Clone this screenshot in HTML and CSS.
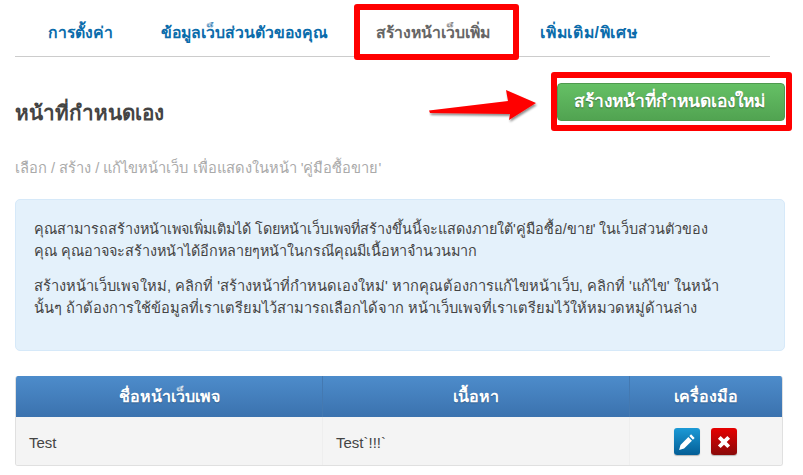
FILE: index.html
```html
<!DOCTYPE html>
<html lang="th">
<head>
<meta charset="utf-8">
<title>หน้าที่กำหนดเอง</title>
<link rel="stylesheet" href="styles.css">
</head>
<body>
<main class="page">
  <nav class="tabs">
    <a class="tab">การตั้งค่า</a>
    <a class="tab">ข้อมูลเว็บส่วนตัวของคุณ</a>
    <a class="tab active">สร้างหน้าเว็บเพิ่ม</a>
    <a class="tab">เพิ่มเติม/พิเศษ</a>
  </nav>
  <header class="head">
    <h1 class="title">หน้าที่กำหนดเอง</h1>
    <a class="btn-new">สร้างหน้าที่กำหนดเองใหม่</a>
  </header>
  <p class="sub">เลือก / สร้าง / แก้ไขหน้าเว็บ เพื่อแสดงในหน้า 'คู่มือซื้อขาย'</p>
  <section class="info">
    <p class="lead">คุณสามารถสร้างหน้าเพจเพิ่มเติมได้ โดยหน้าเว็บเพจที่สร้างขึ้นนี้จะแสดงภายใต้'คู่มือซื้อ/ขาย' ในเว็บส่วนตัวของคุณ คุณอาจจะสร้างหน้าได้อีกหลายๆหน้าในกรณีคุณมีเนื้อหาจำนวนมาก</p>
    <p>สร้างหน้าเว็บเพจใหม่, คลิกที่ 'สร้างหน้าที่กำหนดเองใหม่' หากคุณต้องการแก้ไขหน้าเว็บ, คลิกที่ 'แก้ไข' ในหน้านั้นๆ ถ้าต้องการใช้ข้อมูลที่เราเตรียมไว้สามารถเลือกได้จาก หน้าเว็บเพจที่เราเตรียมไว้ให้หมวดหมู่ด้านล่าง</p>
  </section>
  <div class="table">
    <div class="row thead">
      <div class="cell">ชื่อหน้าเว็บเพจ</div>
      <div class="cell">เนื้อหา</div>
      <div class="cell">เครื่องมือ</div>
    </div>
    <div class="row tbody">
      <div class="cell">Test</div>
      <div class="cell">Test`!!!`</div>
      <div class="cell tools">
        <a class="icon-btn edit"><svg viewBox="0 0 16 16" width="18" height="18"><path d="M11.6 1.2l3.2 3.2-1.5 1.5-3.2-3.2zM9.2 3.6l3.2 3.2L5.4 13.8 1 15l1.2-4.4z" fill="#fff"/></svg></a>
        <a class="icon-btn del"><svg viewBox="0 0 16 16" width="18" height="18"><path d="M2.6 5L5 2.6 8 5.6 11 2.6 13.4 5 10.4 8l3 3L11 13.4 8 10.4 5 13.4 2.6 11l3-3z" fill="#fff"/></svg></a>
      </div>
    </div>
  </div>
  <div class="mark mark-tab"></div>
  <div class="mark mark-btn"></div>
  <svg class="arrow" viewBox="0 0 110 50" width="110" height="50"><defs><filter id="s" x="-10%" y="-20%" width="125%" height="150%"><feDropShadow dx="1" dy="2" stdDeviation="1.2" flood-color="#000" flood-opacity=".45"/></filter></defs><path d="M0 23.5L79 14 77 3 107 16 80 33 81 27 1 26z" fill="#f00" filter="url(#s)"/></svg>
</main>
</body>
</html>
```
FILE: styles.css
```css
* { box-sizing: border-box; }
html, body { margin: 0; background: #fff; }
body {
  font-family: "Liberation Sans", "Noto Sans", sans-serif;
  color: #333;
  font-size: 14px;
  overflow: hidden;
}
.page { position: relative; width: 803px; height: 475px; padding: 10px 18px 0 15px; }
.tabs {
  display: flex;
  height: 47px;
  width: 755px;
  padding-left: 15px;
  border-bottom: 1px solid #ccc;
}
.tab {
  padding: 0 18px;
  line-height: 46px;
  font-size: 15.8px;
  font-weight: 700;
  color: #0b6cab;
  white-space: nowrap;
}
.tab + .tab { margin-left: 12px; }
.tab.active { color: #666; }
.tab:last-child { margin-left: 14px; letter-spacing: .75px; }
.head {
  display: flex;
  justify-content: space-between;
  align-items: center;
  height: 38px;
  margin-top: 26px;
}
.title { margin: 20px 0 0; font-size: 20.7px; font-weight: 700; color: #444; }
.btn-new {
  width: 228px;
  height: 38px;
  padding-right: 4px;
  line-height: 35px;
  text-align: center;
  font-size: 17.4px;
  font-weight: 700;
  color: #fff;
  text-shadow: 0 1px 1px rgba(0,0,0,.4);
  border: 1px solid #4f9a4f;
  border-radius: 4px;
  background: linear-gradient(#65c065, #51a351);
  white-space: nowrap;
}
.sub { margin: 37px 0 0; font-size: 14.7px; line-height: 20px; color: #aaa; }
.info {
  margin-top: 21px;
  width: 770px;
  height: 152px;
  padding: 18px 50px 0 18px;
  background: #e4f1fb;
  border: 1px solid #d6e9f9;
  border-radius: 5px;
  font-size: 14.65px;
  line-height: 22px;
  color: #444;
}
.info p { margin: 0 0 13px; }
.info .lead { font-size: 14.4px; max-width: 680px; }
.table {
  margin-top: 25px;
  width: 768px;
  height: 90px;
  border: 1px solid #e0e0e0;
  border-top: 0;
  border-radius: 3px;
  overflow: hidden;
}
.row { display: grid; grid-template-columns: 306px 307px 1fr; }
.thead {
  height: 41px;
  background: linear-gradient(#4d8ccb, #3b72ae);
  color: #fff;
  font-weight: 700;
  font-size: 16px;
  text-align: center;
  line-height: 41px;
  text-shadow: 0 1px 1px rgba(0,0,0,.25);
}
.thead .cell + .cell { border-left: 1px solid #4479b1; }
.tbody { height: 49px; background: #f4f4f4; line-height: 51px; font-size: 15px; color: #444; }
.tbody .cell { padding-left: 13px; }
.tbody .cell + .cell { border-left: 1px solid #eee; }
.tbody .tools { display: flex; justify-content: center; align-items: center; gap: 11px; padding: 0 2px 2px 0; }
.icon-btn {
  display: flex;
  align-items: center;
  justify-content: center;
  width: 26px;
  height: 27px;
  border-radius: 3px;
  box-shadow: 0 1px 1px rgba(0,0,0,.25);
}
.edit { background: linear-gradient(#1c9ad6, #045e96); }
.del { background: linear-gradient(#e60000, #8a0a0a); }
.mark { position: absolute; border: 6px solid #f00; border-radius: 3px; }
.mark-tab { left: 354px; top: 4px; width: 165px; height: 56px; }
.mark-btn { left: 551px; top: 72px; width: 241px; height: 59px; }
.arrow { position: absolute; left: 429px; top: 87px; }
```
